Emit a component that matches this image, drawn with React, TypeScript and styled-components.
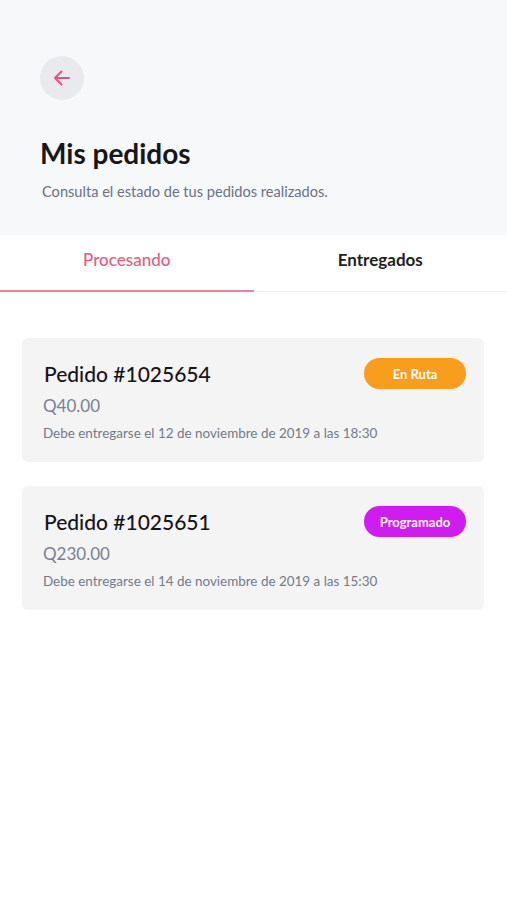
import React, {useState} from "react";
import styled, {createGlobalStyle} from "styled-components";

type Order = {
    id: string;
    price: string;
    due: string;
    status: 'route' | 'scheduled';
}

const orders: Order[] = [
    {id: '1025654', price: 'Q40.00', due: 'Debe entregarse el 12 de noviembre de 2019 a las 18:30', status: 'route'},
    {id: '1025651', price: 'Q230.00', due: 'Debe entregarse el 14 de noviembre de 2019 a las 15:30', status: 'scheduled'},
];

const statusLabel = {route: 'En Ruta', scheduled: 'Programado'};

const App = () => {
    const [tab, setTab] = useState(0);
    return (
        <>
            <GlobalStyle/>
            <RootDiv>
                <HeaderDiv>
                    <BackButton aria-label="Volver">
                        <svg width="20" height="20" viewBox="0 0 20 20" fill="none" stroke="#E6547B" strokeWidth="2" strokeLinecap="round" strokeLinejoin="round">
                            <path d="M17 10H3.5"/>
                            <path d="M9.5 3.5L3 10l6.5 6.5"/>
                        </svg>
                    </BackButton>
                    <Title>Mis pedidos</Title>
                    <Subtitle>Consulta el estado de tus pedidos realizados.</Subtitle>
                </HeaderDiv>
                <TabsDiv>
                    {['Procesando', 'Entregados'].map((label, i) => (
                        <Tab key={label} active={tab === i} onClick={() => setTab(i)}>{label}</Tab>
                    ))}
                </TabsDiv>
                <ListDiv>
                    {orders.map((order) => (
                        <Card key={order.id}>
                            <CardTop>
                                <OrderTitle>Pedido #{order.id}</OrderTitle>
                                <Badge status={order.status}>{statusLabel[order.status]}</Badge>
                            </CardTop>
                            <Price>{order.price}</Price>
                            <DueText>{order.due}</DueText>
                        </Card>
                    ))}
                </ListDiv>
            </RootDiv>
        </>
    )
}

export default App;

const GlobalStyle = createGlobalStyle`
  body {
    margin: 0;
    background: #ffffff;
    font-family: Lato, "Open Sans", sans-serif;
  }
`

const RootDiv = styled.div`
  display: flex;
  flex-direction: column;
  width: 100%;
  min-height: 900px;
  background: #ffffff;
`

const HeaderDiv = styled.div`
  display: flex;
  flex-direction: column;
  align-items: flex-start;
  padding: 56px 40px 34px 40px;
  background: #F7F8FA;
`

const BackButton = styled.button`
  display: flex;
  justify-content: center;
  align-items: center;
  width: 44px;
  height: 44px;
  padding: 0;
  border: none;
  border-radius: 50%;
  background: #E8EAEE;
  cursor: pointer;
`

const Title = styled.h1`
  margin: 36px 0 0 0;
  font-size: 28px;
  font-weight: 700;
  line-height: 34px;
  color: #16171a;
`

const Subtitle = styled.p`
  margin: 13px 0 0 2px;
  font-size: 14.6px;
  line-height: 18px;
  color: #6a7282;
`

const TabsDiv = styled.div`
  display: flex;
  border-bottom: 1px solid #EEEFF2;
`

const Tab = styled.div<{active?: boolean}>`
  flex: 1;
  display: flex;
  justify-content: center;
  align-items: center;
  height: 57px;
  padding-bottom: 6px;
  box-sizing: border-box;
  margin-bottom: -1px;
  font-size: 17px;
  font-weight: ${(props) => props.active ? 500 : 700};
  color: ${(props) => props.active ? '#E55C82' : '#1d1e22'};
  border-bottom: 2px solid ${(props) => props.active ? '#E8839F' : 'transparent'};
  cursor: pointer;
`

const ListDiv = styled.div`
  display: flex;
  flex-direction: column;
  gap: 24px;
  padding: 46px 23px 0 22px;
`

const Card = styled.div`
  display: flex;
  flex-direction: column;
  padding: 20px 18px 20px 21px;
  background: #F4F4F5;
  border-radius: 6px;
`

const CardTop = styled.div`
  display: flex;
  justify-content: space-between;
  align-items: center;
`

const OrderTitle = styled.div`
  font-size: 21px;
  font-weight: 500;
  color: #141518;
  margin-left: 1px;
`

const Badge = styled.div<{status: 'route' | 'scheduled'}>`
  display: flex;
  justify-content: center;
  align-items: center;
  width: 102px;
  height: 31px;
  border-radius: 16px;
  font-size: 13px;
  font-weight: 700;
  color: #ffffff;
  background: ${(props) => props.status === 'route' ? '#F99D1C' : '#D01CF0'};
`

const Price = styled.div`
  margin-top: 6px;
  font-size: 17px;
  line-height: 22px;
  color: #7a8090;
`

const DueText = styled.div`
  margin-top: 7px;
  font-size: 13.45px;
  line-height: 18px;
  color: #737a88;
`
